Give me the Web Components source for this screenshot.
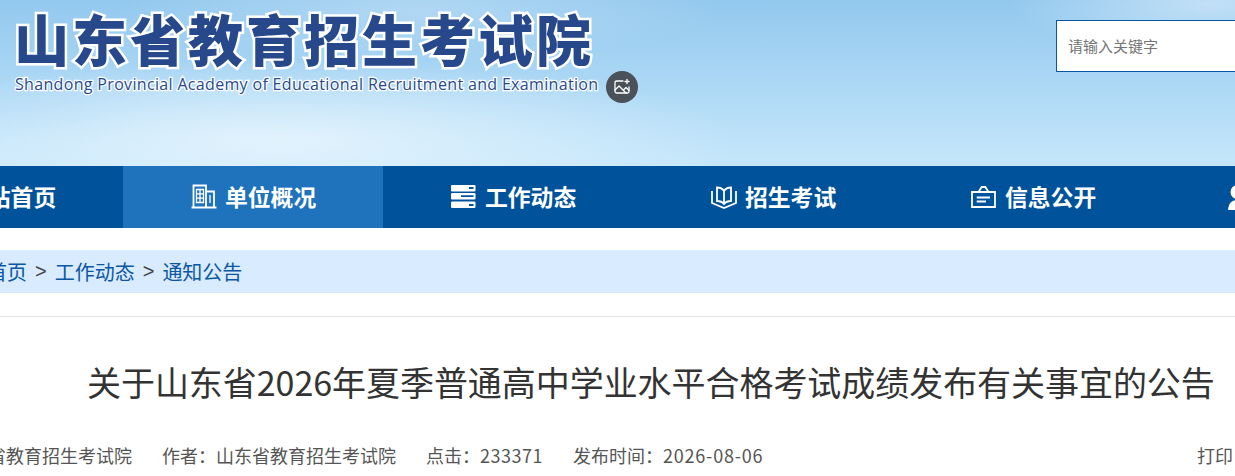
<!DOCTYPE html>
<html lang="zh">
<head>
<meta charset="utf-8">
<title>山东省教育招生考试院</title>
<style>
    html, body {
        margin: 0;
        padding: 0;
        width: 1235px;
        height: 476px;
        overflow: hidden;
        background: #ffffff;
        font-family: "Noto Sans CJK SC", "Noto Sans", sans-serif;
    }
</style>
</head>
<body>
<site-header></site-header>
<site-nav>
    <nav-item icon="home">网站首页</nav-item>
    <nav-item active icon="building">单位概况</nav-item>
    <nav-item icon="server">工作动态</nav-item>
    <nav-item icon="book">招生考试</nav-item>
    <nav-item icon="notice">信息公开</nav-item>
    <nav-item icon="person">互动交流</nav-item>
</site-nav>
<bread-crumb>
    <a>网站首页</a><i>&gt;</i><a>工作动态</a><i>&gt;</i><a>通知公告</a>
</bread-crumb>
<article-head></article-head>

<script>
class SiteHeader extends HTMLElement {
    constructor() {
        super();
        this.attachShadow({ mode: 'open' });
    }

    connectedCallback() {
        this.shadowRoot.innerHTML = `
            <style>
                :host {
                    display: flex;
                    justify-content: space-between;
                    position: relative;
                    height: 166px;
                    padding-left: 14px;
                    box-sizing: border-box;
                    overflow: hidden;
                    background:
                        radial-gradient(ellipse 200px 50px at 1210px 4px, rgba(205,230,248,.8), transparent),
                        radial-gradient(ellipse 300px 50px at 420px 10px, rgba(195,225,246,.6), transparent),
                        radial-gradient(ellipse 460px 80px at 280px 140px, rgba(238,248,254,.75), transparent),
                        radial-gradient(ellipse 120px 40px at 50px 100px, rgba(170,215,245,.5), transparent),
                        linear-gradient(180deg, #93c8ee 0%, #a9d6f4 45%, #c6e7fb 100%);
                }

                .logo {
                    display: flex;
                    flex-direction: column;
                }

                .cn {
                    margin-top: 2px;
                    height: 70px;
                    line-height: 70px;
                    font-size: 55px;
                    font-weight: 900;
                    letter-spacing: 3px;
                    white-space: nowrap;
                    color: #27498c;
                    -webkit-text-stroke: 5px #ffffff;
                    paint-order: stroke fill;
                }

                .en {
                    height: 24px;
                    line-height: 24px;
                    margin-left: 1px;
                    font-family: "Open Sans", sans-serif;
                    font-size: 16px;
                    letter-spacing: .33px;
                    white-space: nowrap;
                    color: #27498c;
                    -webkit-text-stroke: 2.5px #ffffff;
                    paint-order: stroke fill;
                }

                .badge {
                    position: absolute;
                    left: 606px;
                    top: 71px;
                    width: 32px;
                    height: 32px;
                    border-radius: 50%;
                    background: #4b5158;
                    display: flex;
                    align-items: center;
                    justify-content: center;
                }

                .search {
                    display: flex;
                    align-items: center;
                    margin-top: 20px;
                    width: 179px;
                    height: 52px;
                    padding: 0 0 2px 11px;
                    box-sizing: border-box;
                    background: #ffffff;
                    border: 1px solid #0b55a3;
                    border-right: 0;
                    font-size: 15px;
                    color: #757575;
                }
            </style>
            <div class="logo">
                <div class="cn">山东省教育招生考试院</div>
                <div class="en">Shandong Provincial Academy of Educational Recruitment and Examination</div>
            </div>
            <div class="badge">
                <svg width="18" height="18" viewBox="0 0 18 18" fill="none" stroke="#fff" stroke-width="1.3" stroke-linecap="round" stroke-linejoin="round">
                    <path d="M10 3H3.500A1.500 1.500 0 0 0 2 4.500v9A1.500 1.500 0 0 0 3.500 15h11a1.500 1.500 0 0 0 1.500-1.500V9"/>
                    <path d="M2 12l4-4 7 7"/>
                    <path d="M10.500 12l2.500-2.500 3 3"/>
                    <path d="M14 1.500v4M12 3.500h4"/>
                </svg>
            </div>
            <div class="search"><span>请输入关键字</span></div>
        `;
    }
}

const NAV_ICONS = {
    home: '<path d="M3 11l10-8 10 8M5 10v12h16V10"/>',
    building: `<path d="M0.500 23.500h25M2.500 23.500V1.500h12.500v22M15 7.500h8v16"/>
        <path d="M5.500 5.500h7v13h-7zM5.500 9.800h7M5.500 14.100h7M9 5.500v13M19 11v8" stroke-width="1.300"/>`,
    server: `<g fill="#fff" stroke="none">
            <rect x="0" y="1" width="24.500" height="6.400" rx="1.200"/>
            <rect x="0" y="9" width="24.500" height="6.400" rx="1.200"/>
            <rect x="0" y="17.600" width="24.500" height="6.400" rx="1.200"/>
        </g>
        <path stroke="#00539a" stroke-width="1.800" d="M18 4h4.500M10 12.200h12.500M18 21h4.500"/>`,
    book: `<path d="M1 7v12l12 5 12-5V7"/>
        <path d="M13 7c-1.500-2.500-4-3.500-7-3.500V17c3 0 5.500 1 7 3 1.500-2 4-3 7-3V3.500c-3 0-5.500 1-7 3.500zM13 7v13"/>`,
    notice: `<path d="M1 8h23v15H1zM7.500 8l3.200-5h3.600l3.200 5"/>
        <path d="M5.700 13.500H19M5.700 17.500H15"/>`,
    person: `<circle cx="6.500" cy="8" r="7" fill="#fff" stroke="none"/>
        <path d="M-3 26c.5-6 3-10 10-10s9.500 4 10 10z" fill="#fff" stroke="none"/>`
};

class NavItem extends HTMLElement {
    constructor() {
        super();
        this.attachShadow({ mode: 'open' });
    }

    connectedCallback() {
        const icon = NAV_ICONS[this.getAttribute('icon')] || '';
        this.shadowRoot.innerHTML = `
            <style>
                :host {
                    display: flex;
                    flex: 0 0 260px;
                    align-items: center;
                    box-sizing: border-box;
                    padding-left: 68px;
                    gap: 8px;
                    color: #ffffff;
                    font-size: 22.800px;
                    font-weight: 700;
                    line-height: 60px;
                    white-space: nowrap;
                }

                :host([active]) {
                    background: #1f72bc;
                }

                svg {
                    display: block;
                    flex: none;
                    overflow: visible;
                }

                span {
                    display: block;
                    height: 60px;
                    margin-bottom: 1px;
                }
            </style>
            <svg width="26" height="26" viewBox="0 0 26 26" fill="none" stroke="#fff" stroke-width="1.800">${icon}</svg>
            <span><slot></slot></span>
        `;
    }
}

class SiteNav extends HTMLElement {
    constructor() {
        super();
        this.attachShadow({ mode: 'open' });
        this.shadowRoot.innerHTML = `
            <style>
                :host {
                    display: block;
                    height: 62px;
                    overflow: hidden;
                    background: #00539a;
                }

                .row {
                    display: flex;
                    height: 62px;
                    margin-left: -137px;
                }
            </style>
            <div class="row"><slot></slot></div>
        `;
    }
}

class BreadCrumb extends HTMLElement {
    constructor() {
        super();
        this.attachShadow({ mode: 'open' });
        this.shadowRoot.innerHTML = `
            <style>
                :host {
                    display: block;
                    height: 43px;
                    margin-top: 22px;
                    overflow: hidden;
                    background: #d9ebfe;
                }

                .row {
                    display: flex;
                    align-items: center;
                    gap: 8px;
                    height: 43px;
                    margin-left: -53px;
                    white-space: nowrap;
                    font-size: 20px;
                    color: #444444;
                }

                ::slotted(a) {
                    color: #0b57a4;
                }

                ::slotted(i) {
                    font-style: normal;
                    font-family: "Liberation Sans", sans-serif;
                }
            </style>
            <div class="row"><slot></slot></div>
        `;
    }
}

class ArticleHead extends HTMLElement {
    constructor() {
        super();
        this.attachShadow({ mode: 'open' });
    }

    connectedCallback() {
        this.shadowRoot.innerHTML = `
            <style>
                :host {
                    display: block;
                    margin-top: 23px;
                    border-top: 1px solid #e2e2e2;
                    overflow: hidden;
                }

                h1 {
                    margin: 38px 0 0 87px;
                    height: 54px;
                    line-height: 54px;
                    font-size: 34px;
                    font-weight: 400;
                    letter-spacing: -.05px;
                    white-space: nowrap;
                    color: #333333;
                }

                .meta {
                    display: flex;
                    margin: 33px 0 0 -102px;
                    gap: 30px;
                    height: 26px;
                    line-height: 26px;
                    font-size: 18px;
                    white-space: nowrap;
                    color: #555555;
                }

                .hits {
                    letter-spacing: .5px;
                }

                .date {
                    letter-spacing: .8px;
                }

                .print {
                    margin-left: auto;
                    margin-right: 2px;
                }
            </style>
            <h1>关于山东省2026年夏季普通高中学业水平合格考试成绩发布有关事宜的公告</h1>
            <div class="meta">
                <span>来源：山东省教育招生考试院</span>
                <span>作者：山东省教育招生考试院</span>
                <span>点击：<span class="hits">233371</span></span>
                <span>发布时间：<span class="date">2026-08-06</span></span>
                <span class="print">打印</span>
            </div>
        `;
    }
}

customElements.define('site-header', SiteHeader);
customElements.define('nav-item', NavItem);
customElements.define('site-nav', SiteNav);
customElements.define('bread-crumb', BreadCrumb);
customElements.define('article-head', ArticleHead);
</script>
</body>
</html>
